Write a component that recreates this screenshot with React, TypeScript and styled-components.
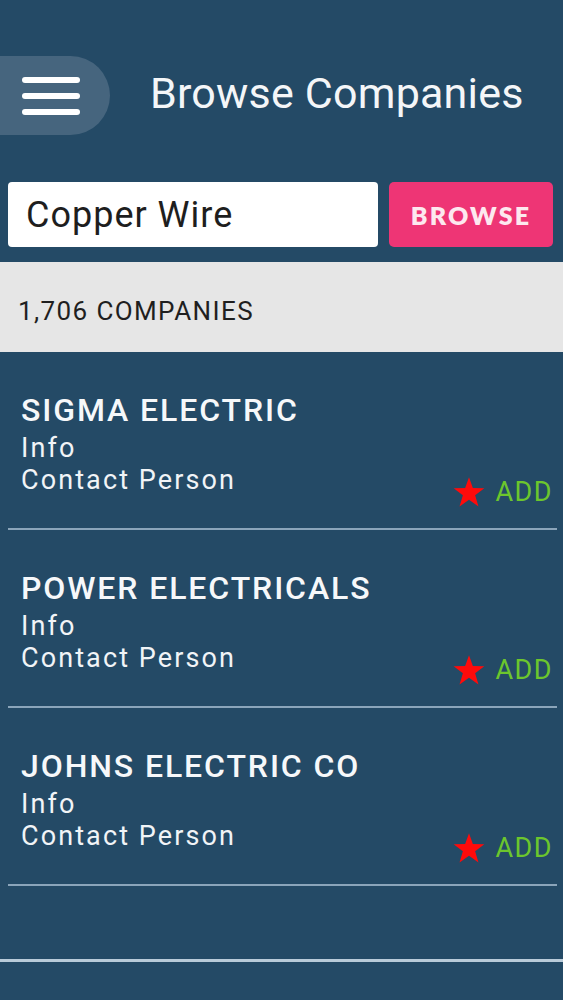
import styled, { createGlobalStyle } from 'styled-components';

const GlobalStyle = createGlobalStyle`
  * {
    box-sizing: border-box;
    margin: 0;
    padding: 0;
  }
  body {
    background-color: #244a66;
    font-family: Roboto, 'Noto Sans', sans-serif;
    color: #fff;
  }
  button {
    border: none;
    background: none;
  }
`;

const Page = styled.div`
  min-height: 1000px;
  background-color: #244a66;
`;

const Header = styled.header`
  display: flex;
  align-items: center;
  padding-top: 56px;
  gap: 40px;
`;

const MenuButton = styled.button`
  width: 110px;
  height: 79px;
  background-color: #46657e;
  border-radius: 0 40px 40px 0;
  display: flex;
  flex-direction: column;
  justify-content: center;
  gap: 10px;
  padding-left: 22px;
`;

const MenuLine = styled.span`
  display: block;
  width: 58px;
  height: 6px;
  border-radius: 3px;
  background-color: #fff;
`;

const Title = styled.h1`
  font-size: 43px;
  font-weight: 400;
  letter-spacing: 0.2px;
  color: #f4f6f8;
  margin-bottom: 6px;
`;

const SearchRow = styled.div`
  display: flex;
  gap: 11px;
  padding: 0 10px 0 8px;
  margin-top: 47px;
`;

const SearchInput = styled.input`
  flex: 1;
  width: 0;
  min-width: 0;
  height: 65px;
  border: none;
  border-radius: 4px;
  background-color: #fff;
  padding: 0 18px;
  font-family: Roboto, sans-serif;
  font-size: 36px;
  letter-spacing: 1px;
  color: #1e1e1e;
  outline: none;
`;

const BrowseButton = styled.button`
  flex: none;
  width: 164px;
  height: 65px;
  border-radius: 5px;
  background-color: #ee3575;
  color: #fde8ef;
  font-family: Lato, 'Open Sans', sans-serif;
  font-weight: 800;
  font-size: 25px;
  letter-spacing: 2.2px;
`;

const CountBar = styled.div`
  margin-top: 15px;
  height: 90px;
  background-color: #e6e6e6;
  display: flex;
  align-items: center;
  padding: 7px 0 0 18px;
  font-size: 26px;
  letter-spacing: 1.4px;
  color: #1f1f1f;
`;

const List = styled.ul`
  list-style: none;
`;

const Item = styled.li`
  display: flex;
  justify-content: space-between;
  align-items: flex-end;
  margin: 0 6px 0 8px;
  padding: 36px 4px 20px 13px;
  border-bottom: 2px solid #8ba5ba;
`;

const Details = styled.div`
  display: flex;
  flex-direction: column;
  margin-bottom: 12px;
`;

const Name = styled.div`
  font-size: 32px;
  font-weight: 500;
  line-height: 44px;
  letter-spacing: 1.9px;
  color: #f6f8fa;
`;

const Line = styled.div`
  font-size: 27px;
  line-height: 32px;
  letter-spacing: 2.1px;
  color: #f1f4f7;
`;

const AddAction = styled.button`
  display: flex;
  align-items: center;
  gap: 10px;
  font-family: Roboto, sans-serif;
  font-size: 27px;
  line-height: 32px;
  letter-spacing: 1.5px;
  color: #6cc62d;
`;

const FooterRule = styled.div`
  height: 76px;
  border-bottom: 3px solid #b9cbd9;
`;

const Star = () => (
  <svg width="32" height="31" viewBox="0 0 24 23" aria-hidden="true">
    <polygon
      points="12,0 14.9,8.2 23.5,8.4 16.6,13.6 19.1,22 12,17 4.9,22 7.4,13.6 0.5,8.4 9.1,8.2"
      fill="#ff0b0b"
    />
  </svg>
);

const companies = ['SIGMA ELECTRIC', 'POWER ELECTRICALS', 'JOHNS ELECTRIC CO'];

const App = () => {
  return (
    <>
      <GlobalStyle />
      <Page>
        <Header>
          <MenuButton aria-label="menu">
            <MenuLine />
            <MenuLine />
            <MenuLine />
          </MenuButton>
          <Title>Browse Companies</Title>
        </Header>
        <SearchRow>
          <SearchInput defaultValue="Copper Wire" />
          <BrowseButton>BROWSE</BrowseButton>
        </SearchRow>
        <CountBar>1,706 COMPANIES</CountBar>
        <List>
          {companies.map((name) => (
            <Item key={name}>
              <Details>
                <Name>{name}</Name>
                <Line>Info</Line>
                <Line>Contact Person</Line>
              </Details>
              <AddAction>
                <Star />
                ADD
              </AddAction>
            </Item>
          ))}
        </List>
        <FooterRule />
      </Page>
    </>
  );
};

export default App;
